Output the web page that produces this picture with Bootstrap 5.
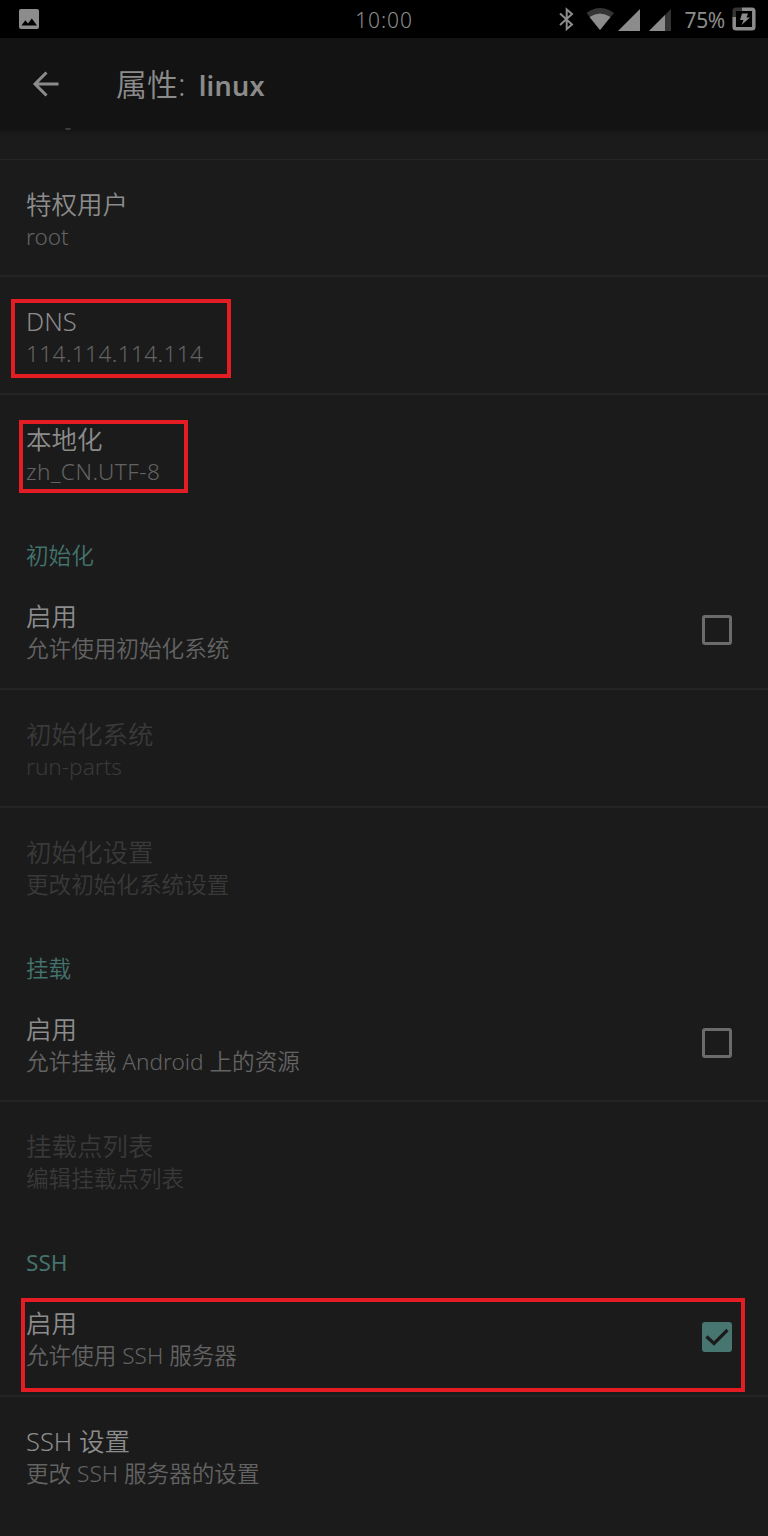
<!DOCTYPE html>
<html lang="zh-CN">
<head>
<meta charset="utf-8">
<meta name="viewport" content="width=device-width, initial-scale=1">
<title>属性: linux</title>
<link href="https://cdn.jsdelivr.net/npm/bootstrap@5.3.0/dist/css/bootstrap.min.css" rel="stylesheet">
<style>
  body { background: #1b1b1b; color: #8c8c8c; font-family: "Noto Sans", "Noto Sans CJK SC", sans-serif; font-weight: 350; height: 1536px; overflow: hidden; }
  .status { height: 38px; background: #000; color: #8c8c8c; font-size: 21px; line-height: 38px; padding: 0 12px 0 18px; }
  .status svg, .appbar svg { display: block; flex: none; }
  .clock { letter-spacing: .9px; top: 1px; }
  .percent { position: relative; top: 1px; margin-left: -22px; margin-right: 7px; font-weight: 400; letter-spacing: -.3px; }
  .appbar { height: 92px; background: #131313; box-shadow: 0 1px 5px rgba(0,0,0,.3); color: #8b8b8b; padding-left: 30px; z-index: 1; }
  .heading { font-size: 31px; line-height: 40px; margin-left: 54px; padding-top: 2px; }
  .heading b { font-size: 27px; font-weight: 600; margin-left: 5px; letter-spacing: .3px; }
  .peek { height: 29.5px; border-bottom: 1.5px solid #262626; }
  .descender { left: 65px; top: -2px; width: 6px; height: 2px; border-radius: 0 0 3px 3px; background: #3c3c3c; z-index: 2; }
  .pref { height: 117.85px; padding: 27px 36px 0 26px; border-bottom: 2px solid #242424; }
  .pref.last { border-color: transparent; }
  .name { font-size: 25.5px; line-height: 34px; }
  .note { font-size: 22.6px; line-height: 32px; color: #636363; }
  .off .name, .off .note { color: #393939; }
  .group { height: 59px; padding: 27px 0 0 26px; font-size: 22.6px; line-height: 32px; color: #43736c; }
  .tick { width: 30px; height: 30px; border: 3px solid #6b6b6b; border-radius: 3px; margin-top: 16px; flex: none; }
  .tick.on { background: #477570; border: 0; }
  .ring { border: 4px solid #e41c23; pointer-events: none; }
  .ring-dns { left: 11px; top: 22px; width: 220px; height: 79px; }
  .ring-locale { left: 19px; top: 25px; width: 169px; height: 73px; }
  .ring-ssh { left: 21px; top: 19px; width: 724px; height: 94px; }
  .wide { letter-spacing: .4px; }
  .note.hinted { letter-spacing: .5px; }
</style>
</head>
<body>
<header class="status d-flex align-items-center position-relative">
  <svg width="22" height="22" viewBox="0 0 22 22"><path fill="#8c8c8c" fill-rule="evenodd" d="M3 1h16a2 2 0 0 1 2 2v16a2 2 0 0 1-2 2H3a2 2 0 0 1-2-2V3a2 2 0 0 1 2-2zM3.500 17.500h15.500l-5.200-7-3.800 5-2.700-3.300z"/></svg>
  <span class="clock position-absolute start-50 translate-middle-x">10:00</span>
  <div class="d-flex align-items-center ms-auto">
    <svg width="148" height="26" viewBox="558 6 148 26">
      <path fill="none" stroke="#8c8c8c" stroke-width="2" d="M560 13.500l12 11-5.300 4.500V9.500l5.300 4.500-12 11"/>
      <path fill="#343434" d="M586.500 13q13.500-10 27.500 0L600 30z"/>
      <path fill="#8c8c8c" d="M589.500 17q10.500-7 21 0L600 30z"/>
      <path fill="#8c8c8c" d="M618 31L640 9v22z"/>
      <path fill="#343434" d="M649 31L671 9v22z"/>
      <path fill="#8c8c8c" d="M649 31L665 15v16z"/>
    </svg>
    <span class="percent">75%</span>
    <svg width="24" height="24" viewBox="0 0 24 24"><path fill="none" stroke="#8c8c8c" stroke-width="3.500" d="M10 2.200h10q1.800 0 1.800 1.800v16q0 1.800-1.800 1.800H4q-1.800 0-1.800-1.800V10"/><path fill="none" stroke="#343434" stroke-width="3.500" d="M10 2.200H4Q2.200 2.200 2.200 4v6"/><path fill="#8c8c8c" d="M10 6.500h6l-1.500 4h3.500L9.500 18l2-5H8z"/></svg>
  </div>
</header>
<div class="appbar d-flex align-items-center position-relative">
  <svg width="32" height="32" viewBox="0 0 32 32"><path fill="none" stroke="#8b8b8b" stroke-width="3" d="M28.500 16H5M16.500 4.500L5 16l11.500 11.500"/></svg>
  <div class="heading">属性: <b>linux</b></div>
</div>
<main>
  <div class="peek position-relative"><span class="descender position-absolute"></span></div>
  <div class="pref"><div class="name">特权用户</div><div class="note">root</div></div>
  <div class="pref position-relative"><div class="name">DNS</div><div class="note wide">114.114.114.114</div><div class="ring ring-dns position-absolute"></div></div>
  <div class="pref last position-relative"><div class="name">本地化</div><div class="note hinted">zh_CN.UTF-8</div><div class="ring ring-locale position-absolute"></div></div>

  <div class="group">初始化</div>
  <div class="pref d-flex justify-content-between"><div><div class="name">启用</div><div class="note">允许使用初始化系统</div></div><span class="tick"></span></div>
  <div class="pref off"><div class="name">初始化系统</div><div class="note">run-parts</div></div>
  <div class="pref last off"><div class="name">初始化设置</div><div class="note">更改初始化系统设置</div></div>

  <div class="group">挂载</div>
  <div class="pref d-flex justify-content-between"><div><div class="name">启用</div><div class="note">允许挂载 Android 上的资源</div></div><span class="tick"></span></div>
  <div class="pref last off"><div class="name">挂载点列表</div><div class="note">编辑挂载点列表</div></div>

  <div class="group fw-normal">SSH</div>
  <div class="pref position-relative d-flex justify-content-between"><div><div class="name">启用</div><div class="note">允许使用 SSH 服务器</div></div><span class="tick on"><svg class="d-block" width="30" height="30" viewBox="0 0 30 30"><path fill="none" stroke="#1b1b1b" stroke-width="3.200" d="M4.500 14.500l7.500 7L25.500 8"/></svg></span><div class="ring ring-ssh position-absolute"></div></div>
  <div class="pref last"><div class="name">SSH 设置</div><div class="note">更改 SSH 服务器的设置</div></div>
</main>
<script src="https://cdn.jsdelivr.net/npm/bootstrap@5.3.0/dist/js/bootstrap.bundle.min.js"></script>
</body>
</html>
